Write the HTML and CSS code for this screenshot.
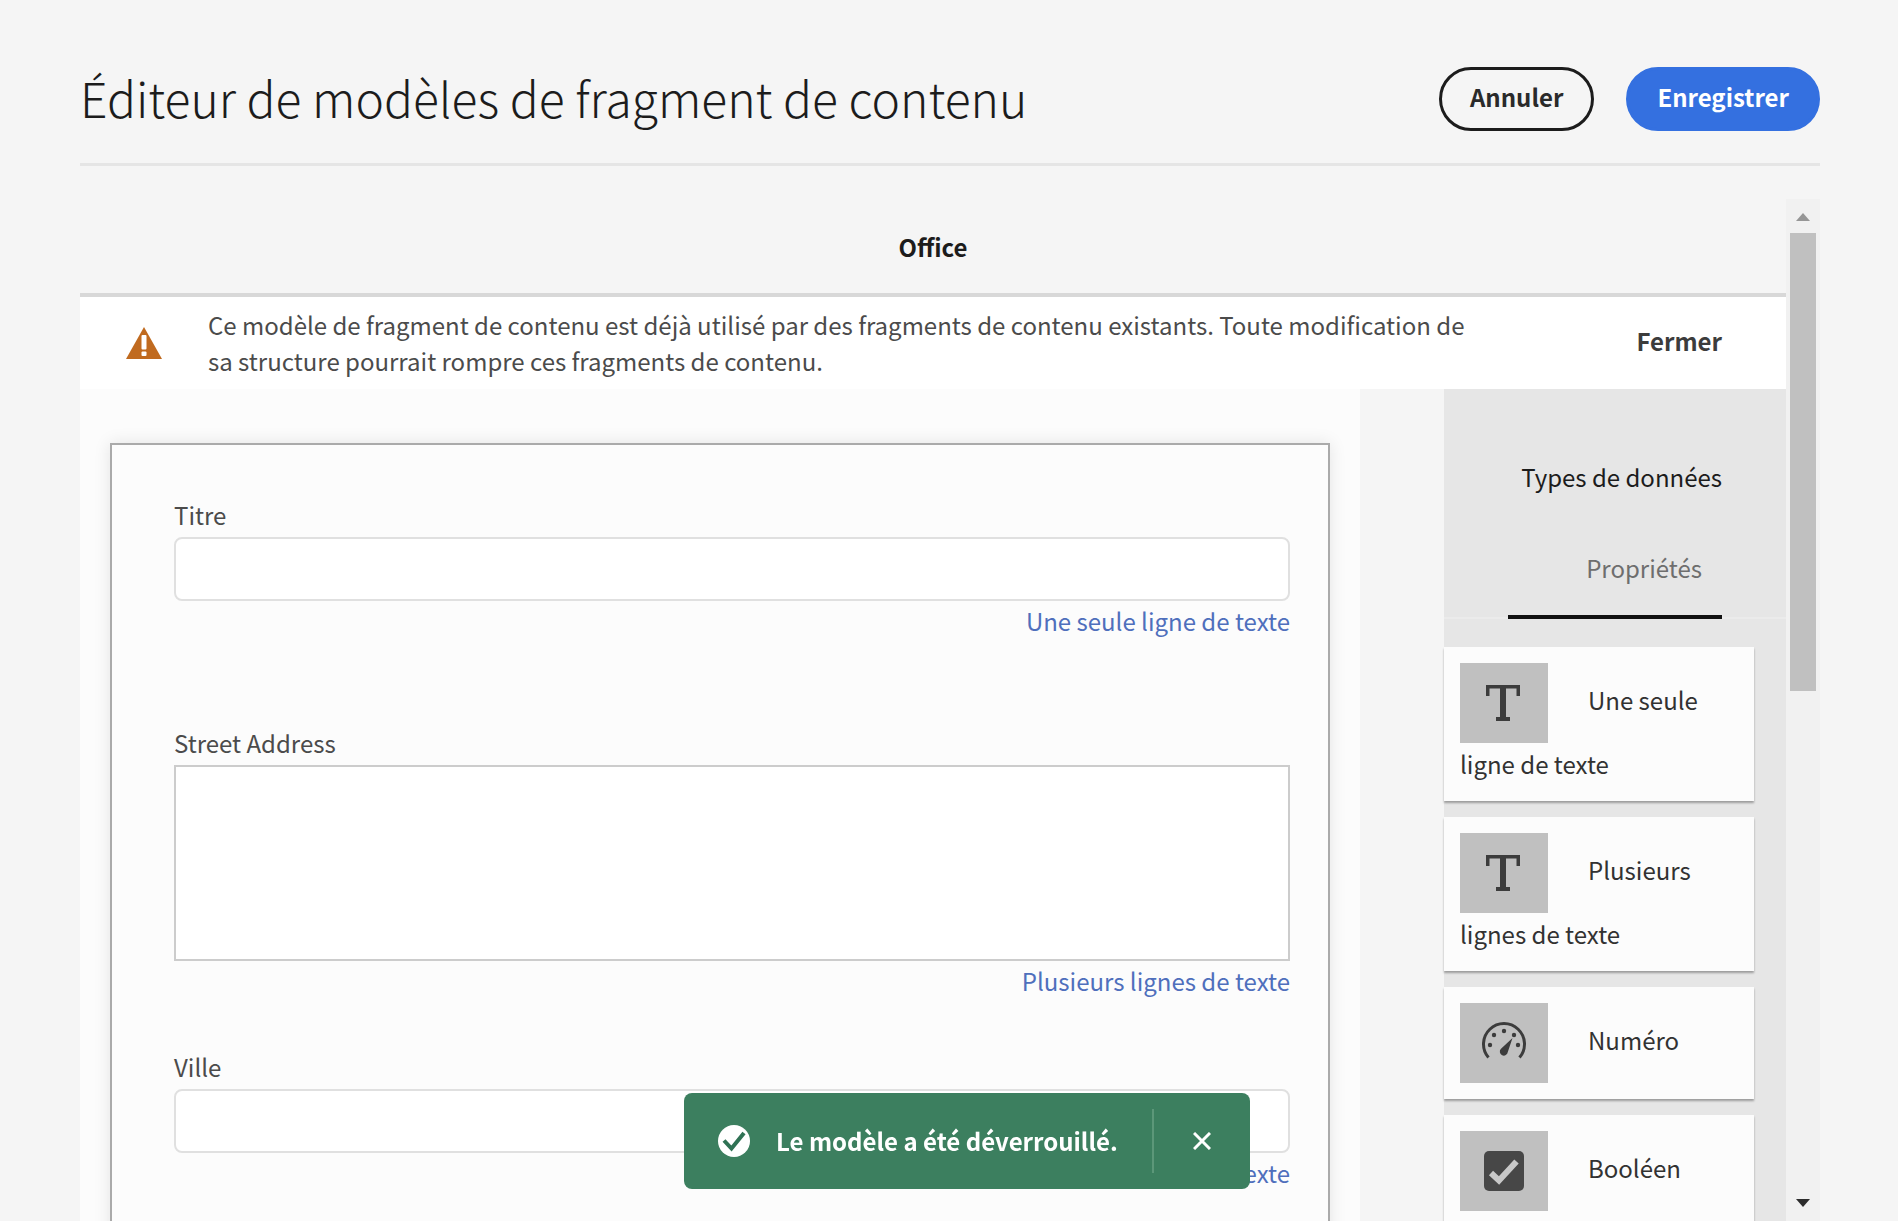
FILE: index.html
```html
<!DOCTYPE html>
<html lang="fr">
<head>
<meta charset="utf-8">
<meta name="viewport" content="width=device-width, initial-scale=1">
<title>Éditeur de modèles de fragment de contenu</title>
<link rel="stylesheet" href="styles.css">
</head>
<body>
<header class="page-header">
  <h1 class="page-title">Éditeur de modèles de fragment de contenu</h1>
  <div class="actions">
    <button type="button" class="button button-outline">Annuler</button>
    <button type="button" class="button button-primary">Enregistrer</button>
  </div>
</header>

<div class="viewport">
  <main class="editor">
    <h2 class="model-name">Office</h2>

    <div class="alert" role="alert">
      <svg class="alert-icon" viewBox="0 0 36 32" aria-hidden="true">
        <path d="M18 0 36 32H0Z" fill="#c06a1f"/>
        <rect x="15.5" y="8" width="5" height="14.500" rx="1" fill="#fff"/>
        <rect x="15.5" y="24.5" width="5" height="4.500" rx="1" fill="#fff"/>
      </svg>
      <p class="alert-text">Ce modèle de fragment de contenu est déjà utilisé par des fragments de contenu existants. Toute modification de sa structure pourrait rompre ces fragments de contenu.</p>
      <button type="button" class="alert-close">Fermer</button>
    </div>

    <div class="columns">
      <section class="preview">
        <form class="form-card">
          <div class="field field-spaced">
            <label class="field-label" for="titre">Titre</label>
            <input class="field-input" type="text" id="titre">
            <span class="field-hint">Une seule ligne de texte</span>
          </div>
          <div class="field">
            <label class="field-label" for="street">Street Address</label>
            <textarea class="field-area" id="street"></textarea>
            <span class="field-hint">Plusieurs lignes de texte</span>
          </div>
          <div class="field">
            <label class="field-label" for="ville">Ville</label>
            <input class="field-input" type="text" id="ville">
            <span class="field-hint">Une seule ligne de texte</span>
          </div>
        </form>
      </section>

      <aside class="sidebar">
        <div class="tab-bar">
          <div class="tabs" role="tablist">
            <button type="button" class="tab tab-selected" role="tab" aria-selected="true">Types de données</button>
            <button type="button" class="tab tab-inset" role="tab" aria-selected="false">Propriétés</button>
          </div>
        </div>
        <ul class="types">
          <li class="type"><span class="tile"><svg viewBox="0 0 48 48" aria-hidden="true"><path d="M6 6H40V17H36.500V9.500H26V38H30V42H16V38H20V9.500H9.500V17H6Z" fill="#3c3c3c"/></svg></span>Une seule ligne de texte</li>
          <li class="type"><span class="tile"><svg viewBox="0 0 48 48" aria-hidden="true"><path d="M6 6H40V17H36.500V9.500H26V38H30V42H16V38H20V9.500H9.500V17H6Z" fill="#3c3c3c"/></svg></span>Plusieurs lignes de texte</li>
          <li class="type"><span class="tile"><svg viewBox="0 0 48 48" aria-hidden="true"><path d="M8.500 38.500A20.500 20.500 0 1 1 39.500 38.500" fill="none" stroke="#3c3c3c" stroke-width="3"/><g fill="#3c3c3c"><circle cx="10" cy="26" r="2.200"/><circle cx="14" cy="16" r="2.200"/><circle cx="24" cy="12" r="2.200"/><circle cx="34" cy="16" r="2.200"/><circle cx="38" cy="26" r="2.200"/><path d="M32.500 19 27.800 33A4 4 0 1 1 21 29.800Z"/></g></svg></span>Numéro</li>
          <li class="type"><span class="tile"><svg viewBox="0 0 48 48" aria-hidden="true"><rect x="4" y="4" width="40" height="40" rx="5" fill="#474747"/><path d="M11 26 19 33.500 36.500 14.500" fill="none" stroke="#c8c8c8" stroke-width="6"/></svg></span>Booléen</li>
        </ul>
      </aside>
    </div>
  </main>

  <div class="scrollbar" aria-hidden="true">
    <svg class="arrow" viewBox="0 0 14 8"><path d="M7 0 14 8H0Z" fill="#969696"/></svg>
    <div class="scroll-track"><div class="scroll-thumb"></div></div>
    <svg class="arrow" viewBox="0 0 14 8"><path d="M0 0H14L7 8Z" fill="#2c2c2c"/></svg>
  </div>
</div>

<div class="toast" role="status">
  <svg class="toast-icon" viewBox="0 0 32 32" aria-hidden="true"><circle cx="16" cy="16" r="16" fill="#fff"/><path d="M6 15.500 13.500 23.500 26 8" fill="none" stroke="#2f7254" stroke-width="4"/></svg>
  <span class="toast-text">Le modèle a été déverrouillé.</span>
  <button type="button" class="toast-close" aria-label="Fermer la notification">
    <svg viewBox="0 0 18 18" aria-hidden="true"><path d="M1 1 17 17M17 1 1 17" stroke="#fff" stroke-width="3"/></svg>
  </button>
</div>
</body>
</html>
```
FILE: styles.css
```css
* {
  box-sizing: border-box;
}

body {
  margin: 0;
  height: 100vh;
  padding: 0 78px 0 80px;
  display: flex;
  flex-direction: column;
  overflow: hidden;
  background: #f5f5f5;
  color: #4b4b4b;
  font-family: "Noto Sans CJK SC", "Open Sans", sans-serif;
  font-size: 24px;
  line-height: 36px;
}

button {
  margin: 0;
  padding: 0;
  border: 0;
  background: none;
  color: inherit;
  font: inherit;
  cursor: pointer;
}

.page-header {
  flex: none;
  display: flex;
  align-items: center;
  justify-content: space-between;
  padding: 67px 0 32px;
  border-bottom: 3px solid #e5e5e5;
}

.page-title {
  margin: 0;
  padding-bottom: 4px;
  color: #1c1c1c;
  font-size: 48px;
  font-weight: 300;
  line-height: 60px;
}

.actions {
  display: flex;
  gap: 32px;
}

.button {
  height: 64px;
  padding: 0 28px 4px;
  border: 3px solid #1c1c1c;
  border-radius: 32px;
  color: #2a2a2a;
  font-weight: 700;
}

.button-primary {
  border-color: #3470e0;
  background: #3470e0;
  color: #fff;
}

.viewport {
  flex: 1;
  min-height: 0;
  display: flex;
  margin-top: 33px;
}

.editor {
  flex: 1;
  min-width: 0;
  overflow: hidden;
}

.model-name {
  margin: 0;
  padding: 30px 0 28px;
  border-bottom: 4px solid #d8d8d8;
  color: #1c1c1c;
  font-size: 24px;
  font-weight: 700;
  line-height: 36px;
  text-align: center;
}

.alert {
  display: flex;
  align-items: center;
  padding: 10px 64px 10px 46px;
  background: #fff;
}

.alert-icon {
  flex: none;
  width: 36px;
  height: 32px;
}

.alert-text {
  flex: 1;
  max-width: 1280px;
  margin: 0 auto 0 46px;
}

.alert-close {
  padding-bottom: 4px;
  color: #3c3c3c;
  font-weight: 700;
}

.columns {
  display: flex;
}

.preview {
  flex: 1;
  min-width: 0;
  margin-right: 84px;
  padding: 54px 30px 32px;
  background: #fcfcfc;
}

.form-card {
  padding: 52px 38px 52px 62px;
  border: 2px solid #aaa;
  background: #fcfcfc;
  box-shadow: 0 0 16px rgba(0, 0, 0, 0.1);
}

.field {
  display: flex;
  flex-direction: column;
  padding-bottom: 50px;
}

.field-spaced {
  padding-bottom: 86px;
}

.field-label {
  padding-bottom: 4px;
}

.field-input,
.field-area {
  width: 100%;
  height: 64px;
  margin: 0;
  padding: 0 16px;
  border: 2px solid #e0e0e0;
  border-radius: 8px;
  background: #fff;
  color: inherit;
  font: inherit;
}

.field-area {
  height: 196px;
  border-color: #ccc;
  border-radius: 0;
  resize: none;
}

.field-hint {
  padding-top: 2px;
  color: #4f6fbc;
  text-align: right;
}

.sidebar {
  flex: none;
  width: 342px;
  background: #e6e6e6;
}

.tab-bar {
  display: flex;
  justify-content: flex-end;
  padding: 44px 64px 0 0;
  border-bottom: 2px solid #ebebeb;
}

.tabs {
  display: flex;
  flex-direction: column;
  width: 214px;
  margin-bottom: -2px;
  border-bottom: 4px solid #111;
}

.tab {
  height: 91px;
  padding-bottom: 4px;
  color: #6e6e6e;
  text-align: right;
  white-space: nowrap;
}

.tab-selected {
  color: #1c1c1c;
}

.tab-inset {
  padding-right: 20px;
}

.types {
  display: flex;
  flex-direction: column;
  gap: 16px;
  margin: 0;
  padding: 28px 32px 16px 0;
  list-style: none;
}

.type {
  padding: 16px;
  background: #fcfcfc;
  box-shadow: 0 2px 2px rgba(0, 0, 0, 0.32);
  color: #323232;
  line-height: 42px;
}

.tile {
  display: inline-flex;
  align-items: center;
  justify-content: center;
  width: 88px;
  height: 80px;
  margin-right: 40px;
  background: #c0c0c0;
  vertical-align: middle;
}

.tile svg {
  width: 48px;
  height: 48px;
}

.scrollbar {
  flex: none;
  display: flex;
  flex-direction: column;
  align-items: center;
  width: 34px;
  padding: 14px 0;
  background: #f1f1f1;
}

.arrow {
  flex: none;
  width: 14px;
  height: 8px;
}

.scroll-track {
  flex: 1;
  width: 26px;
  margin: 12px 0;
}

.scroll-thumb {
  height: 48%;
  background: #c0c0c0;
}

.toast {
  position: fixed;
  left: 684px;
  bottom: 32px;
  display: flex;
  align-items: center;
  height: 96px;
  padding-left: 34px;
  border-radius: 8px;
  background: #3c7f5f;
  color: #fff;
  font-weight: 700;
}

.toast-icon {
  width: 32px;
  height: 32px;
}

.toast-text {
  margin: 0 34px 0 26px;
}

.toast-close {
  display: flex;
  align-items: center;
  justify-content: center;
  width: 98px;
  height: 64px;
  border-left: 2px solid #5c9779;
}

.toast-close svg {
  width: 18px;
  height: 18px;
}
```
